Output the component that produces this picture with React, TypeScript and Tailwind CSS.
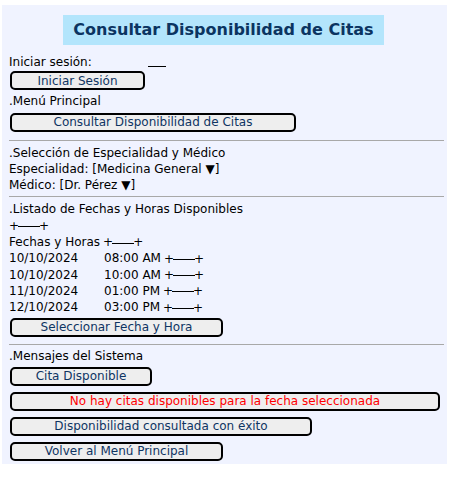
const font = "font-['DejaVu_Sans',sans-serif]";

function Btn({ label, w, red }: { label: string; w: string; red?: boolean }) {
  return (
    <div
      className={`${w} h-[19px] flex items-center justify-center rounded-[5px] border-2 border-black bg-[#eeeeee] text-[12px] leading-none ${red ? 'text-[#ff0000]' : 'text-[#0f3563]'}`}
    >
      {label}
    </div>
  );
}

function Line({ children }: { children: React.ReactNode }) {
  return <div className="h-[16.3px] leading-[16.3px] whitespace-pre">{children}</div>;
}

function Dash({ gap }: { gap?: boolean }) {
  return (
    <span className={`inline-flex items-center align-middle ${gap ? 'ml-[3px]' : ''}`}>
      <span>+</span>
      <span className="inline-block w-[22px] h-px bg-black -mx-[1px] mt-[1px]" />
      <span>+</span>
    </span>
  );
}

function Sep() {
  return <div className="h-px bg-[#a8a8a8] mr-[3px]" />;
}

const slots = [
  ['10/10/2024', '08:00 AM'],
  ['10/10/2024', '10:00 AM'],
  ['11/10/2024', '01:00 PM'],
  ['12/10/2024', '03:00 PM'],
];

export default function App() {
  return (
    <div className={`${font} w-[449px] h-[479px] bg-white pt-[5px] pl-[2px]`}>
      <div className="w-[445px] bg-[#f0f3ff] pt-[10px] pb-[3px] text-[12px] text-black">
        <div className="ml-[61px] w-[321px] h-[30px] bg-[#b3e5fc] flex items-center justify-center text-[16px] font-bold text-[#0b3461]">
          Consultar Disponibilidad de Citas
        </div>
        <div className="pl-[7px]">
          <div className="mt-[9px] flex">
            <Line>Iniciar sesión:</Line>
            <span className="ml-[56px] mt-[12px] w-[18px] h-px bg-black" />
          </div>
          <div className="mt-[1px] pl-[1px]">
            <Btn label="Iniciar Sesión" w="w-[135px]" />
          </div>
          <div className="mt-[3px]">
            <Line>.Menú Principal</Line>
          </div>
          <div className="mt-[3px] pl-[1px]">
            <Btn label="Consultar Disponibilidad de Citas" w="w-[286px]" />
          </div>
          <div className="mt-[8px]">
            <Sep />
          </div>
          <div className="mt-[4px]">
            <Line>.Selección de Especialidad y Médico</Line>
            <Line>Especialidad: [Medicina General ▼]</Line>
            <Line>Médico: [Dr. Pérez ▼]</Line>
          </div>
          <div className="mt-[3px]">
            <Sep />
          </div>
          <div className="mt-[4px]">
            <Line>.Listado de Fechas y Horas Disponibles</Line>
            <Line>
              <Dash />
            </Line>
            <Line>
              Fechas y Horas<Dash gap />
            </Line>
            {slots.map(([d, t]) => (
              <Line key={d + t}>
                <span className="inline-block w-[95px]">{d}</span>
                {t}
                <Dash gap />
              </Line>
            ))}
          </div>
          <div className="mt-[2px] pl-[1px]">
            <Btn label="Seleccionar Fecha y Hora" w="w-[213px]" />
          </div>
          <div className="mt-[7px]">
            <Sep />
          </div>
          <div className="mt-[3px]">
            <Line>.Mensajes del Sistema</Line>
          </div>
          <div className="mt-[3px] pl-[1px] flex flex-col gap-[6px]">
            <Btn label="Cita Disponible" w="w-[142px]" />
            <Btn label="No hay citas disponibles para la fecha seleccionada" w="w-[430px]" red />
            <Btn label="Disponibilidad consultada con éxito" w="w-[302px]" />
            <Btn label="Volver al Menú Principal" w="w-[213px]" />
          </div>
        </div>
      </div>
    </div>
  );
}
